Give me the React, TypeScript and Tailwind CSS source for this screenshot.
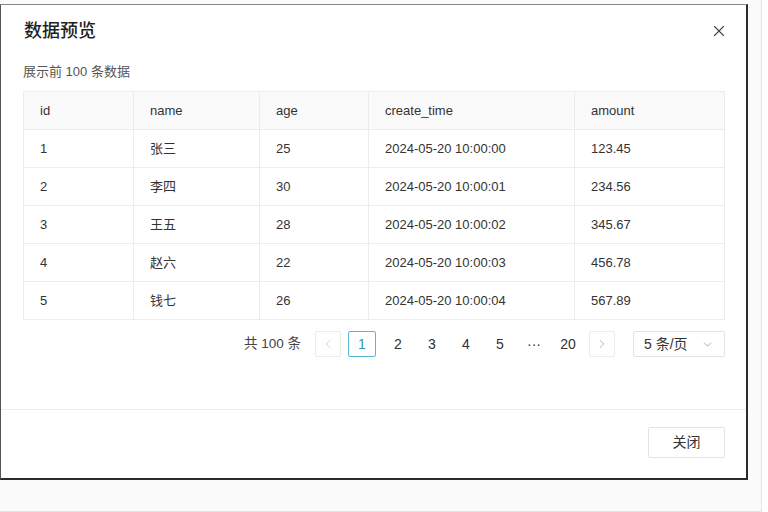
import { X, ChevronLeft, ChevronRight, ChevronDown } from "lucide-react";

const COLUMNS = [
  { key: "id", label: "id", width: "w-[110px]" },
  { key: "name", label: "name", width: "w-[126px]" },
  { key: "age", label: "age", width: "w-[109px]" },
  { key: "create_time", label: "create_time", width: "w-[206px]" },
  { key: "amount", label: "amount", width: "flex-1" },
];

const ROWS = [
  { id: "1", name: "张三", age: "25", create_time: "2024-05-20 10:00:00", amount: "123.45" },
  { id: "2", name: "李四", age: "30", create_time: "2024-05-20 10:00:01", amount: "234.56" },
  { id: "3", name: "王五", age: "28", create_time: "2024-05-20 10:00:02", amount: "345.67" },
  { id: "4", name: "赵六", age: "22", create_time: "2024-05-20 10:00:03", amount: "456.78" },
  { id: "5", name: "钱七", age: "26", create_time: "2024-05-20 10:00:04", amount: "567.89" },
];

const PAGES = ["2", "3", "4", "5", "···", "20"];

export default function App() {
  return (
    <div
      className="h-[512px] w-[768px] bg-white"
      style={{ fontFamily: '"Liberation Sans", "Noto Sans CJK SC", sans-serif' }}
    >
      <div className="h-[512px] w-[762px] border-b border-r border-[#e4e4e4] bg-[#fbfbfb] pt-1">
        {/* ── dialog ─────────────────────────────── */}
        <div className="flex h-[476px] w-[748px] flex-col border-b-2 border-l border-r-2 border-t border-b-[#2b2b2b] border-l-[#555] border-r-[#2b2b2b] border-t-[#888] bg-white">
          <div className="flex items-center justify-between px-[23px] pt-[13px]">
            <h2 className="text-[18px] font-medium leading-[26px] text-[#1f1f1f]">数据预览</h2>
            <X className="mr-[-5px] h-[18px] w-[18px] text-[#444]" strokeWidth={1.5} />
          </div>

          <div className="flex-1 pl-[22px] pr-[21px]">
            <p className="mt-[18px] text-[13px] leading-[20px] text-[#555]">展示前 100 条数据</p>

            <div className="mt-[9px] border border-[#ececec] text-[13px] text-[#333]">
              <div className="flex h-[37px] bg-[#fafafa]">
                {COLUMNS.map((c, i) => (
                  <div
                    key={c.key}
                    className={`${c.width} flex items-center px-[16px] ${i < COLUMNS.length - 1 ? "border-r border-[#ececec]" : ""}`}
                  >
                    {c.label}
                  </div>
                ))}
              </div>
              {ROWS.map((r) => (
                <div key={r.id} className="flex h-[38px] border-t border-[#ececec]">
                  {COLUMNS.map((c, i) => (
                    <div
                      key={c.key}
                      className={`${c.width} flex items-center px-[16px] ${i < COLUMNS.length - 1 ? "border-r border-[#ececec]" : ""}`}
                    >
                      {r[c.key as keyof typeof r]}
                    </div>
                  ))}
                </div>
              ))}
            </div>

            {/* pagination */}
            <div className="mt-[11px] flex items-center justify-end text-[14px] text-[#333]">
              <span className="mr-[14px] text-[13.5px] text-[#444]">共 100 条</span>
              <span className="flex h-[26px] w-[26px] items-center justify-center rounded-[2px] border border-[#ececec] text-[#c8c8c8]">
                <ChevronLeft className="h-[14px] w-[14px]" strokeWidth={1.5} />
              </span>
              <span className="ml-[7px] mr-[5px] flex h-[26px] w-[28px] items-center justify-center rounded-[2px] border border-[#5bb7d2] text-[#2a9cc0]">
                1
              </span>
              {PAGES.map((p) => (
                <span key={p} className="flex h-[26px] min-w-[34px] items-center justify-center px-[2px]">
                  {p}
                </span>
              ))}
              <span className="ml-[4px] flex h-[26px] w-[26px] items-center justify-center rounded-[2px] border border-[#ececec] text-[#aaa]">
                <ChevronRight className="h-[14px] w-[14px]" strokeWidth={1.5} />
              </span>
              <span className="ml-[18px] flex h-[26px] w-[92px] items-center justify-between rounded-[2px] border border-[#e2e2e2] pl-[10px] pr-[10px]">
                5 条/页
                <ChevronDown className="h-[13px] w-[13px] text-[#999]" strokeWidth={1.5} />
              </span>
            </div>
          </div>

          {/* footer */}
          <div className="flex h-[69px] items-start justify-end border-t border-[#ececec] px-[21px] pt-[17px]">
            <button className="h-[31px] w-[77px] rounded-[2px] border border-[#e2e2e2] bg-white text-[14px] text-[#333]">
              关闭
            </button>
          </div>
        </div>
      </div>
    </div>
  );
}
